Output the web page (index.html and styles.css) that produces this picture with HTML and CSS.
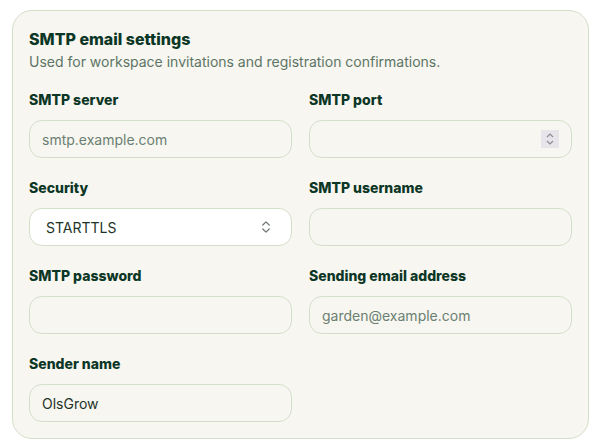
FILE: index.html
```html
<!DOCTYPE html>
<html>
<head>
<meta charset="utf-8">
<link rel="stylesheet" href="styles.css">
</head>
<body>
<section class="card">
  <h2 class="title">SMTP email settings</h2>
  <p class="subtitle">Used for workspace invitations and registration confirmations.</p>
  <div class="grid">
    <div class="field">
      <label class="label">SMTP server</label>
      <div class="input"><span class="placeholder">smtp.example.com</span></div>
    </div>
    <div class="field">
      <label class="label">SMTP port</label>
      <div class="input">
        <span class="spinner">
          <svg width="10" height="14" viewBox="0 0 10 14"><path d="M2 5 L5 2 L8 5" fill="none" stroke="#8e8c96" stroke-width="1.2"/><path d="M2 9 L5 12 L8 9" fill="none" stroke="#8e8c96" stroke-width="1.2"/></svg>
        </span>
      </div>
    </div>
    <div class="field">
      <label class="label">Security</label>
      <div class="input select"><span class="value">STARTTLS</span>
        <svg class="chev" width="10" height="16" viewBox="0 0 10 16"><path d="M1.8 6 L5 2.8 L8.2 6" fill="none" stroke="#6c7570" stroke-width="1.2" stroke-linecap="round" stroke-linejoin="round"/><path d="M1.8 10 L5 13.2 L8.2 10" fill="none" stroke="#6c7570" stroke-width="1.2" stroke-linecap="round" stroke-linejoin="round"/></svg>
      </div>
    </div>
    <div class="field">
      <label class="label">SMTP username</label>
      <div class="input"></div>
    </div>
    <div class="field">
      <label class="label">SMTP password</label>
      <div class="input"></div>
    </div>
    <div class="field">
      <label class="label">Sending email address</label>
      <div class="input"><span class="placeholder">garden@example.com</span></div>
    </div>
    <div class="field">
      <label class="label">Sender name</label>
      <div class="input"><span class="value">OlsGrow</span></div>
    </div>
  </div>
</section>
</body>
</html>
```
FILE: styles.css
```css
* { box-sizing: border-box; }
html, body { margin: 0; background: #ffffff; }
body {
  padding: 10px 14px 9px 12px;
  font-family: Inter, "Noto Sans", sans-serif;
  color: #0f3a2a;
}
.card {
  width: 577px;
  background: #f8f6f0;
  border: 1px solid #d3dfc9;
  border-radius: 20px;
  padding: 16px;
}
.title {
  margin: 0;
  font-size: 16px;
  line-height: 24px;
  font-weight: 800;
  color: #0c3626;
}
.subtitle {
  margin: 1px 0 0;
  font-size: 14px;
  line-height: 20px;
  color: #5c7566;
}
.grid {
  margin-top: 18px;
  display: grid;
  grid-template-columns: 1fr 1fr;
  column-gap: 17px;
  row-gap: 20px;
}
.field { display: flex; flex-direction: column; gap: 10px; }
.label {
  font-size: 14px;
  line-height: 20px;
  font-weight: 800;
  color: #0c3626;
}
.input {
  position: relative;
  height: 38px;
  border: 1px solid #d3dfc9;
  border-radius: 13px;
  background: #f8f6f0;
  display: flex;
  align-items: center;
  padding: 0 12px;
  font-size: 14px;
}
.placeholder { color: #6a8072; }
.value { color: #1d3328; }
.select {
  background: #ffffff;
  padding: 0 20px 0 16px;
  justify-content: space-between;
}
.spinner {
  position: absolute;
  right: 12px;
  top: 9px;
  width: 18px;
  height: 18px;
  background: #e7e5ea;
  display: flex;
  align-items: center;
  justify-content: center;
}
```
